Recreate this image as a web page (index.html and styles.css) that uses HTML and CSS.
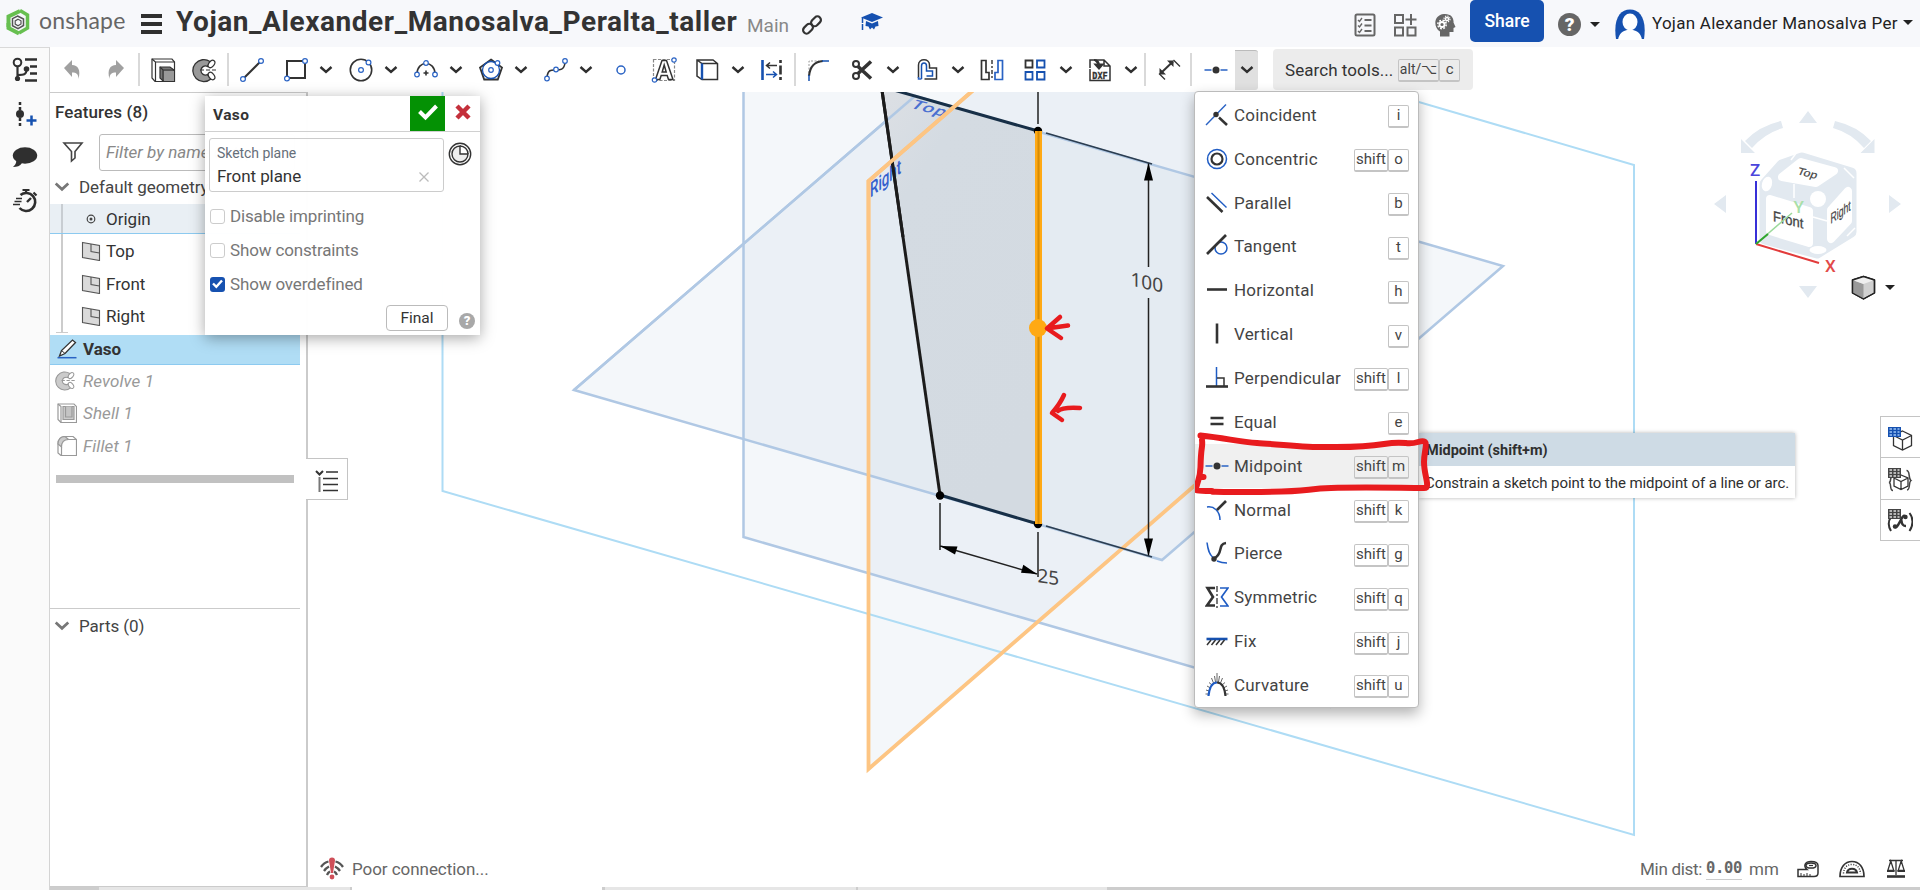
FILE: index.html
```html
<!DOCTYPE html>
<html lang="en">
<head>
<meta charset="utf-8">
<title>Yojan_Alexander_Manosalva_Peralta_taller</title>
<link rel="stylesheet" href="styles.css">
</head>
<body>
<svg class="defs" width="0" height="0">
  <symbol id="chev" viewBox="0 0 14 10"><path d="M1.500 2l5.500 5 5.500-5" fill="none" stroke="currentColor" stroke-width="2.400"/></symbol>
  <symbol id="plane" viewBox="0 0 20 20"><path d="M1.500 1.500l17 3v15l-17-3z" fill="#dadada" stroke="#555" stroke-width="1.100"/><path d="M10 3v7.500l8.500 1.500" fill="none" stroke="#555" stroke-width="1.100"/></symbol>
  <symbol id="revolve" viewBox="0 0 28 28"><path d="M18 5.500a11 11 0 1 0 1 17.500l-3.500-4.500a4.500 4.500 0 1 1 0-8z" fill="currentColor" stroke="#333" stroke-width="1.300"/><ellipse cx="19.500" cy="8" rx="4.200" ry="2.600" transform="rotate(-52 19.500 8)" fill="#fff" stroke="#333" stroke-width="1.200"/><ellipse cx="19.500" cy="20" rx="4.200" ry="2.600" transform="rotate(52 19.500 20)" fill="#fff" stroke="#333" stroke-width="1.200"/><path d="M8 14h18" stroke="#333" stroke-width="1.200" stroke-dasharray="4 2"/></symbol>
</svg>

<header class="topbar">
  <svg class="logo" width="26" height="28" viewBox="0 0 26 28"><path d="M15 3L3.500 8.500V19" fill="none" stroke="#67bf50" stroke-width="4"/><path d="M3.500 15v5L14 25.500" fill="none" stroke="#67bf50" stroke-width="4"/><path d="M15 2.500l7.500 4.500v13l-8.500 5" fill="none" stroke="#67bf50" stroke-width="3.500"/><path d="M12.500 8l6 3v6.500l-5.500 3.200-5.500-3v-7z" fill="#f7f8fb" stroke="#555" stroke-width="1.500"/><path d="M13 11.200l3 1.600v3.200l-3 1.800-2.800-1.700v-3.200z" fill="none" stroke="#555" stroke-width="1.200"/></svg>
  <span class="brand">onshape</span>
  <span class="burger"><i></i><i></i><i></i></span>
  <h1 class="doc-title">Yojan_Alexander_Manosalva_Peralta_taller</h1>
  <span class="branch">Main</span>
  <svg class="link" width="22" height="22" viewBox="0 0 22 22" fill="none" stroke="#333" stroke-width="2.200"><rect x="9.500" y="3.800" width="11" height="7" rx="3.500" transform="rotate(-45 15 7.300)"/><rect x="1.500" y="11.200" width="11" height="7" rx="3.500" transform="rotate(-45 7 14.700)"/></svg>
  <svg class="grad" width="22" height="20" viewBox="0 0 22 20" fill="#1651b0"><path d="M11 1l11 4.500L11 10 0 5.500z"/><path d="M5 9l6 2.500L17 9l.5 5-3 .5-1.500 3-2-2-2 2-1.500-3-3-.5z"/><path d="M1.500 6v12" stroke="#1651b0" stroke-width="1.500" stroke-dasharray="5 1 6"/></svg>
  <div class="account">
    <svg width="22" height="24" viewBox="0 0 22 24" fill="none" stroke="#666"><rect x="1.500" y="1.500" width="19" height="21" rx="1.500" stroke-width="2"/><path d="M4 7l1.500 1.500L8 5M4 12.500L5.500 14 8 10.500M4 18l1.500 1.500L8 16" stroke-width="1.400"/><path d="M10.500 7h7M10.500 12.500h7M10.500 18h7" stroke-width="2"/></svg>
    <svg width="24" height="24" viewBox="0 0 24 24" fill="none" stroke="#666" stroke-width="2"><path d="M2 2h8v8H2zM2 14.500h8v8H2zM14.500 14.500h8v8h-8zM18 1v11M12.500 6.500h11"/></svg>
    <svg width="22" height="24" viewBox="0 0 22 24"><path d="M6 23.500v-5C-1 14-.5 2 10 1c7-.5 10 4 9.500 8.500L21.500 14l-2 1v4h-4v4.500z" fill="#666"/><g fill="none" stroke="#fff"><circle cx="8" cy="11.500" r="2.500" stroke-width="1.800"/><circle cx="8" cy="11.500" r="4.200" stroke-width="1.500" stroke-dasharray="1.800 1.500"/><circle cx="13" cy="6" r="1.600" stroke-width="1.500"/><circle cx="13" cy="6" r="3" stroke-width="1.200" stroke-dasharray="1.200 1.160"/></g></svg>
    <button class="share">Share</button>
    <span class="help">?</span>
    <i class="tri"></i>
    <svg class="avatar" width="30" height="31" viewBox="0 0 30 31"><path d="M1 30C-2 10 5 .5 15 .5S32 10 29 30z" fill="#1651b0"/><ellipse cx="15" cy="13" rx="7.500" ry="8.500" fill="#fff"/><path d="M3 31c1-7 5-9 9-10h6c4 1 8 3 9 10z" fill="#fff"/></svg>
    <span class="user">Yojan Alexander Manosalva Per</span>
    <i class="tri tri-user"></i>
  </div>
</header>

<div class="shell">
  <nav class="rail">
    <svg width="26" height="26" viewBox="0 0 26 26" fill="none" stroke="#2f2f2f"><circle cx="5.500" cy="5.500" r="3.800" stroke-width="2"/><path d="M5.500 9v13M5.500 18c7 0 9-1 9-5" stroke-width="2.200"/><circle cx="5.500" cy="21.500" r="2.600" fill="#2f2f2f" stroke="none"/><circle cx="14.500" cy="12" r="2.800" fill="#2f2f2f" stroke="none"/><path d="M13 2.500h12M18 9.500h7M18 16.500h7M13 23.500h12" stroke-width="2.300"/></svg>
    <svg width="26" height="26" viewBox="0 0 26 26"><path d="M8 1v8M8 17v9" stroke="#2f2f2f" stroke-width="2.500" stroke-dasharray="3 2"/><circle cx="8" cy="13" r="4" fill="#2f2f2f"/><path d="M14.500 19.500h10M19.500 14.500v10" stroke="#1651b0" stroke-width="2.500"/></svg>
    <svg width="26" height="26" viewBox="0 0 26 26"><ellipse cx="13" cy="11.500" rx="12.200" ry="8.300" fill="#2f2f2f"/><path d="M4 15c1 4-1 6-3 8 4 0 7-1 9-4z" fill="#2f2f2f"/></svg>
    <svg width="26" height="26" viewBox="0 0 26 26" fill="none" stroke="#2f2f2f"><path d="M8.500 7a9 9 0 1 1-1 13" stroke-width="2.600"/><path d="M10.500 2h7M14 2v4M21.500 4.500l3 3" stroke-width="2.200"/><path d="M15 14l4-4" stroke-width="2.400"/><path d="M4 10.500h6M2.500 13.500h7M1 16.500h7" stroke-width="1.500"/></svg>
  </nav>

  <div class="work">
    <div class="toolbar">
      <span class="tool"><svg viewBox="0 0 28 28"><path d="M6 12l8-8v5c6 0 9 5 6.500 14 0-5-2-6.500-6.500-6.500V21z" fill="#a0a0a0"/></svg></span>
      <span class="tool"><svg viewBox="0 0 28 28"><path d="M23 12l-8-8v5c-6 0-9 5-6.500 14 0-5 2-6.500 6.500-6.500V21z" fill="#a0a0a0"/></svg></span>
      <i class="sep first"></i>
      <span class="tool"><svg viewBox="0 0 28 28" stroke="#333" stroke-width="1.200"><path d="M3 3h20l2.500 3v19.500H6L3 22z" fill="#fff"/><path d="M3 3l3.500 3v19M6.500 6h19" fill="none"/><path d="M11 11h10l4 3v11H14l-3-3z" fill="#777"/><path d="M11 11l3 3h11M14 14v11" fill="none"/><path d="M15 15h10v10H15z" fill="#999" stroke="none"/></svg></span>
      <span class="tool dark"><svg><use href="#revolve"/></svg></span>
      <i class="sep"></i>
      <span class="tool"><svg viewBox="0 0 28 28"><path d="M6 22L22 6" stroke="#333" stroke-width="2"/><g class="pt"><circle cx="5" cy="23" r="2.400"/><circle cx="23" cy="5" r="2.400"/></g></svg></span>
      <span class="tool"><svg viewBox="0 0 28 28"><path d="M5 5h18v17H5z" fill="none" stroke="#333" stroke-width="2"/><g class="pt"><circle cx="5" cy="22.500" r="2.400"/><circle cx="23" cy="5" r="2.400"/></g></svg></span>
      <svg class="chev"><use href="#chev"/></svg>
      <span class="tool"><svg viewBox="0 0 28 28"><circle cx="14" cy="14" r="10.700" fill="none" stroke="#333" stroke-width="1.600"/><g class="pt"><circle cx="14" cy="14" r="2.400"/><circle cx="21.500" cy="6.500" r="2.400"/></g></svg></span>
      <svg class="chev"><use href="#chev"/></svg>
      <span class="tool"><svg viewBox="0 0 28 28"><path d="M5 18c0-14 18-14 18 0M11.500 17h5M14 14.500v5" fill="none" stroke="#333" stroke-width="1.600"/><g class="pt"><circle cx="5" cy="18.500" r="2.300"/><circle cx="14" cy="7" r="2.300"/><circle cx="23" cy="18.500" r="2.300"/></g></svg></span>
      <svg class="chev"><use href="#chev"/></svg>
      <span class="tool"><svg viewBox="0 0 28 28"><path d="M14 3.500l11 8-4.200 12H7.200L3 11.500z" fill="none" stroke="#333" stroke-width="1.800"/><circle cx="14" cy="14" r="8.500" fill="none" stroke="#1651b0" stroke-width="1.300"/><g class="pt"><circle cx="14" cy="14" r="2.300"/><circle cx="20.500" cy="7" r="2.300"/></g></svg></span>
      <svg class="chev"><use href="#chev"/></svg>
      <span class="tool"><svg viewBox="0 0 28 28"><path d="M5 21c1-8 5-7 9-7s8 0 9-7" fill="none" stroke="#333" stroke-width="1.600"/><g class="pt"><circle cx="5" cy="22.500" r="2.300"/><circle cx="14" cy="13.500" r="2.300"/><circle cx="23" cy="5" r="2.300"/></g></svg></span>
      <svg class="chev"><use href="#chev"/></svg>
      <span class="tool"><svg viewBox="0 0 28 28"><circle cx="14" cy="14" r="4" fill="none" stroke="#2a63c4" stroke-width="1.500"/></svg></span>
      <span class="tool"><svg viewBox="0 0 28 28"><rect x="3.500" y="3.500" width="21" height="21" fill="none" stroke="#888" stroke-width="1.200" stroke-dasharray="3 1.500"/><path d="M12 4.500h4.500l6.500 19h-4.500l-1.300-4h-6L9.800 23.500H5.500zm2.200 4.500l-2 7h4z" fill="#fff" stroke="#333" stroke-width="1.500"/><g class="pt"><circle cx="24" cy="4" r="2.200"/><circle cx="4.500" cy="24" r="2.200"/></g></svg></span>
      <span class="tool"><svg viewBox="0 0 28 28" fill="none" stroke="#333" stroke-width="1.500"><path d="M4 4h16l4.500 3.500v16H9L4 20zM4 4l5 3.500h15.500"/><path d="M9 7.500v16" stroke="#1651b0" stroke-width="2.400"/></svg></span>
      <svg class="chev"><use href="#chev"/></svg>
      <span class="tool"><svg viewBox="0 0 28 28"><path d="M4.500 4v20" stroke="#1651b0" stroke-width="2.600"/><path d="M22.500 4v20" stroke="#333" stroke-width="2.600" stroke-dasharray="3 2.500 9 2.500"/><path d="M19 9.500H9M12 6.500l-3.500 3 3.500 3" fill="none" stroke="#333" stroke-width="1.500"/><path d="M8 18.500h10M15 15.500l3.500 3-3.500 3" fill="none" stroke="#1651b0" stroke-width="1.500"/></svg></span>
      <i class="sep"></i>
      <span class="tool"><svg viewBox="0 0 28 28" fill="none"><path d="M4 17V5h10" stroke="#999" stroke-dasharray="2 1.500"/><path d="M4 20C5 10 10 5.500 18 5" stroke="#333" stroke-width="2.200"/><path d="M4 19v6M17 5h7" stroke="#1651b0" stroke-width="1.500"/></svg></span>
      <span class="tool"><svg viewBox="0 0 28 28" fill="none" stroke="#333"><circle cx="8" cy="8" r="3" stroke-width="2"/><circle cx="8" cy="20" r="3" stroke-width="2"/><path d="M10 10.500L23 22.500M10 17.500L23 5.500" stroke-width="3.600"/></svg></span>
      <svg class="chev"><use href="#chev"/></svg>
      <span class="tool"><svg viewBox="0 0 28 28" fill="none"><path d="M5.500 22V9c0-7 11-7 11 0v3h7v11h-12" stroke="#333" stroke-width="1.500"/><path d="M8.500 23V10c0-4 5-4 5 0v5h6v5h-6" stroke="#1651b0" stroke-width="1.500"/><path d="M5.500 21v2h3" stroke="#2a63c4" stroke-width="1.500"/></svg></span>
      <svg class="chev"><use href="#chev"/></svg>
      <span class="tool"><svg viewBox="0 0 28 28" fill="none" stroke-width="1.700"><path d="M3.500 4.500H8v12h3v7H3.500z" stroke="#333"/><path d="M14 4v20" stroke="#333" stroke-width="1.400" stroke-dasharray="4 2 2 2"/><path d="M24.500 4.500H20v12h-3v7h7.500z" stroke="#2a63c4"/></svg></span>
      <span class="tool"><svg viewBox="0 0 28 28" fill="none" stroke="#1651b0" stroke-width="1.800"><path d="M4.500 4.500h7v7h-7z" stroke="#333"/><path d="M16 4.500h7.500v7H16zM4.500 16h7v7.500h-7zM16 16h7.500v7.500H16z"/></svg></span>
      <svg class="chev"><use href="#chev"/></svg>
      <span class="tool"><svg viewBox="0 0 28 28" fill="none" stroke="#333"><path d="M4 12V4h14l6 6v14.500H4V13M18 4v6h6" stroke-width="1.500"/><path d="M8 4c4 0 5 2 5 6M9.500 8.500l3.500 4 3.500-4z" stroke-width="2" fill="#333"/><text x="14" y="23" class="dxf">DXF</text></svg></span>
      <svg class="chev"><use href="#chev"/></svg>
      <i class="sep"></i>
      <span class="tool"><svg viewBox="0 0 28 28" fill="#333" stroke="#333"><path d="M6 17L18 5.500" stroke-width="2"/><path d="M4.500 18.500V12l6.500 6.500zM18.500 4.500H12l6.500 6.500z" stroke="none"/><path d="M4 17.500l6 6M18.500 4l6.500 6.500" stroke-width="1.300"/></svg></span>
      <i class="sep"></i>
      <span class="tool"><svg viewBox="0 0 28 28"><path d="M2.500 14h7M18.500 14h7" stroke="#2a63c4" stroke-width="1.700"/><circle cx="14" cy="14" r="3.500" fill="#333"/></svg></span>
      <span class="drop"><svg class="chev"><use href="#chev"/></svg></span>
      <div class="search">Search tools...<kbd class="wide">alt/⌥</kbd><kbd>c</kbd></div>
    </div>

    <div class="main">
      <aside class="panel">
        <h2 class="features">Features (8)</h2>
        <div class="filter"><svg width="22" height="22" viewBox="0 0 22 22"><path d="M2 2h18l-7 8.500V17l-3.500 3v-9.500z" fill="none" stroke="#444" stroke-width="1.600"/></svg><span class="filter-box">Filter by name or type</span></div>
        <div class="group default"><svg width="16" height="12"><use href="#chev"/></svg>Default geometry</div>
        <ul class="geometry">
          <li class="origin"><svg width="20" height="20" viewBox="0 0 20 20"><circle cx="10" cy="10" r="3.800" fill="none" stroke="#444" stroke-width="1.200"/><circle cx="10" cy="10" r="1.500" fill="#444"/></svg>Origin</li>
          <li><svg width="20" height="20"><use href="#plane"/></svg>Top</li>
          <li><svg width="20" height="20"><use href="#plane"/></svg>Front</li>
          <li><svg width="20" height="20"><use href="#plane"/></svg>Right</li>
        </ul>
        <ul class="features-list">
          <li class="active"><svg width="20" height="20" viewBox="0 0 20 20"><path d="M2.500 17l2-5.500L15.500 1l3 2.500L8 14.500z" fill="#fff" stroke="#333" stroke-width="1.300"/><path d="M4.500 11.500L8 14.500" stroke="#333"/><path d="M.5 18.700h19" stroke="#2a63c4" stroke-width="1.500"/></svg>Vaso</li>
          <li class="off"><svg width="23" height="23" class="faded"><use href="#revolve"/></svg>Revolve 1</li>
          <li class="off"><svg width="20" height="20" viewBox="0 0 20 20" fill="#fff" stroke="#999" stroke-width="1.200"><path d="M1 1h16l2.500 2.500v16H4L1 16.500z"/><path d="M1 1l3 2.500v16" fill="none"/><path d="M6 3.500h11v13H6z" fill="#ccc"/><path d="M8.500 3.500v10.500H15V3.500" fill="#c4c4c4"/></svg>Shell 1</li>
          <li class="off"><svg width="20" height="20" viewBox="0 0 20 20" fill="#fff" stroke="#999" stroke-width="1.200"><path d="M1 17V8c0-5 3-7.500 7-7.500h8l3.500 3v16H4z"/><path d="M1 8c0-5 3-7.500 7-7.500l3.500 3C7 3.500 4.500 6 4.500 11z" fill="#ccc"/><path d="M11 3.500h8.500M4.500 11v8.500" fill="none"/></svg>Fillet 1</li>
        </ul>
        <div class="rollback"></div>
        <div class="group parts"><svg width="16" height="12"><use href="#chev"/></svg>Parts (0)</div>
      </aside>

      <section class="view">
        <svg class="scene" width="1612" height="795" viewBox="308 92 1612 795">
          <defs><linearGradient id="face" x1="0" y1="0" x2=".6" y2="1"><stop offset="0" stop-color="#dfe1e5"/><stop offset=".3" stop-color="#d4dbe2"/><stop offset="1" stop-color="#d3dae1"/></linearGradient></defs>
          <g fill="#c8d7e6" fill-opacity=".2">
            <path d="M743.500 80V537L1331 707V80z"/><path d="M574 390L1162 560 1503 266 915 96z"/><path d="M868.500 181L1209-113V474L868.500 770z"/>
          </g>
          <path d="M442.500 80V491L1634 835V165L1330 76" fill="none" stroke="#aedcf5" stroke-width="2"/>
          <g fill="none" stroke="#b0c8e4" stroke-width="2.500"><path d="M743.500 80V537L1331 707"/><path d="M574 390L1162 560 1503 266 915 96z"/></g>
          <path d="M880.500 80L940 495 1038 524V131L862 80z" fill="url(#face)"/>
          <path d="M574 390L915 96" stroke="#b0c8e4" stroke-width="2.500"/>
          <path d="M880.500 80L940 495" stroke="#1b1b1b" stroke-width="3"/>
          <path d="M862 81L1038 131M940 495L1038 524" stroke="#172f47" stroke-width="3"/>
          <g class="plane-label"><text transform="matrix(1.120 .3 -.62 .66 909 107.500)">Top</text><text class="tall" transform="matrix(.74 -.6 0 1.150 870 198)">Right</text></g>
          <path d="M985 80L868.500 181V769L1209 473" fill="none" stroke="#fdc583" stroke-width="3.800"/>
          <path d="M880.500 80L903 237" stroke="#1b1b1b" stroke-width="3"/>
          <path d="M985 80L868.500 181V240" fill="none" stroke="#fdc583" stroke-width="3.800"/>
          <g stroke="#222" stroke-width="1.500" fill="none"><path d="M1038 92V124M1038 532V577M940 503V550M940.500 546L1037 574M1148.500 163V267M1148.500 298V556"/><path d="M1046 133L1152 164M1046 526L1152 557" stroke="#2b3d50" stroke-width="1.800"/></g>
          <path d="M1148.500 163l4.500 17.500h-9zM1148.500 556l4.500-17.500h-9zM940 546l17.500 .500-2.500 8zM1037 574l-16-1.200 2.300-8z" fill="#000"/>
          <circle cx="940" cy="495.500" r="4.200"/><circle cx="1038" cy="131" r="4.200"/><circle cx="1038" cy="524" r="4.200"/>
          <path d="M1038.500 131V524" stroke="#ffa914" stroke-width="7"/><path d="M1038.500 131V524" stroke="#d68c05" stroke-width="2"/>
          <circle cx="1038" cy="328" r="9" fill="#ffa914"/>
          <g class="dim"><text transform="matrix(1 .22 0 1 1130.500 285.500)">100</text><text transform="matrix(1 .15 0 1 1037.500 582)">25</text></g>
          <path d="M1060 317L1047 328.500 1061 338M1068 325.500L1050 328M1064 395Q1060 404 1052 413L1062 420M1058 411Q1062 407 1080 408" class="ink thin"/>

          <g fill="#e2e9f0"><path d="M1799 123h18l-9-12zM1799 286h18l-9 12zM1726 195v18l-12-9zM1889 195v18l12-9zM1741 139l14 14h-14zM1874.500 139v14h-14z"/><path d="M1781 121l2 7q-18 5-31 20l-7-7q14-15 36-20zM1835 121l-2 7q18 5 31 20l7-7q-14-15-36-20z"/></g>
          <path d="M1802 158L1851 173V232L1817 253 1765 239V184L1782 165z" fill="#e2e9f0" stroke="#e2e9f0" stroke-width="11" stroke-linejoin="round"/>
          <g fill="#fff" stroke="#fff" stroke-width="8" stroke-linejoin="round"><path d="M1770 199L1809 211V243L1770 231z"/><path d="M1782 177L1801 162 1834 171 1816 183z"/><path d="M1831 210L1848 191V221L1831 239z"/></g>
          <g fill="#fff"><circle cx="1818" cy="199" r="8"/><ellipse cx="1767" cy="184" rx="5" ry="7.500" transform="rotate(15 1767 184)"/><ellipse cx="1818" cy="250" rx="8.500" ry="4"/></g>
          <path d="M1794 184V198M1813 217L1827 221M1791 160l6-8M1844 168l10 10M1847 236l8-8" stroke="#fff" stroke-width="1.500"/>
          <g class="cube"><text transform="matrix(1 .25 -.35 .8 1796.500 174)">Top</text><text class="big" transform="matrix(1 .25 0 1.120 1773 221)">Front</text><text transform="matrix(.72 -.5 0 1.200 1830.500 224)">Right</text></g>
          <path d="M1756 244V181" stroke="#3730d8" stroke-width="2"/><path d="M1756 244L1819 263" stroke="#e23b3b" stroke-width="2"/><path d="M1756 244L1792 213" stroke="#9bd99b" stroke-width="1.500"/><path d="M1756 244L1768 234" stroke="#2fa52f" stroke-width="2"/>
          <g class="axis"><text x="1750" y="176" fill="#4b45dc">Z</text><text x="1825" y="272" fill="#e24a4a">X</text><text x="1793.500" y="213" fill="#a8e0a8">Y</text></g>
          <g stroke="#222" stroke-width="1.400" stroke-linejoin="round"><path d="M1852.500 280L1863.500 276.500 1874.500 280V293L1863.500 299 1852.500 293z" fill="#d0d0d0"/><path d="M1852.500 280L1863.500 284V299L1852.500 293z" fill="#999" stroke="none"/><path d="M1852.500 280L1863.500 276.500 1874.500 280 1863.500 284z" fill="#efefef" stroke="none"/><path d="M1852.500 280L1863.500 276.500 1874.500 280V293L1863.500 299 1852.500 293z" fill="none"/></g>
          <path d="M1885 285h10l-5 5z" fill="#222"/>
        </svg>

        <div class="list-toggle"><svg width="26" height="24" viewBox="0 0 26 24" fill="none" stroke="#333" stroke-width="1.600"><path d="M2 2l3.500 3.500L9 2" stroke-width="2"/><path d="M5.500 8v15" stroke="#777" stroke-width="2"/><path d="M12 3h12M9 9.500h15M9 15.500h15M9 21.500h15"/></svg></div>

        <div class="side-tabs">
          <span><svg viewBox="0 0 28 28"><path d="M17.500 6l9 4.500v10L17.500 25 8.500 20.500V10.500zM8.500 10.500l9 4.500 9-4.500M17.500 15v10" fill="#fff" stroke="#333" stroke-width="1.300"/><path d="M3 2h13v10H3z" fill="#1651b0"/><path d="M4.500 4h2.500m1.500 0h2.500m1.500 0h2M4.500 7h2.500m1.500 0h2.500m1.500 0h2M4.500 10h2.500m1.500 0h2.500m1.500 0h2" stroke="#9cc4f5" stroke-width="1.700"/></svg></span>
          <span><svg viewBox="0 0 28 28"><path d="M16 9l7 3v8l-7 3.500L9 20v-8zM9 12l7 3.500 7-3.500M16 15.500v8" fill="none" stroke="#333" stroke-width="1.300"/><path d="M8 10c-4 0-1 6-4 6.500 3 .5 0 8 4 8M21.500 4.500c4 0 1.500 8 4.500 10-3 2 0 9-4 9.500" fill="none" stroke="#444" stroke-width="1.500"/><path d="M3 2h13v10H3z" fill="#444"/><path d="M4.500 4h2.500m1.500 0h2.500m1.500 0h2M4.500 7h2.500m1.500 0h2.500m1.500 0h2M4.500 10h2.500m1.500 0h2.500m1.500 0h2" stroke="#ddd" stroke-width="1.500"/></svg></span>
          <span><svg viewBox="0 0 28 28"><path d="M6 10c-3.500 5-3 9 0 14M24.500 6c4 5 4 12 0 18" fill="none" stroke="#333" stroke-width="2"/><path d="M9 19q1.500 3 4-1l4-7q2-4 4-1M13 10q3-1 3.500 4T21 19" fill="none" stroke="#333" stroke-width="2.500"/><circle cx="10" cy="19.500" r="2.200" fill="#333"/><circle cx="20.500" cy="10" r="2.200" fill="#333"/><path d="M3 2h13v10H3z" fill="#444"/><path d="M4.500 4h2.500m1.500 0h2.500m1.500 0h2M4.500 7h2.500m1.500 0h2.500m1.500 0h2M4.500 10h2.500m1.500 0h2.500m1.500 0h2" stroke="#ddd" stroke-width="1.500"/></svg></span>
        </div>

        <div class="status">
          <svg width="24" height="24" viewBox="0 0 24 24" fill="none" stroke="#555" stroke-width="2.300"><path d="M1 10Q4 5.500 8.500 4.500M4 14Q6 11 9 9.500M7 18Q8 15.500 10 14.500M23 10Q20 5.500 15.500 4.500M20 14Q18 11 15 9.500M17 18Q16 15.500 14 14.500"/><path d="M9 3.500a3 3 0 0 1 6 0L13 16h-2z" fill="#cf4f59" stroke="none"/><circle cx="12" cy="20" r="2.400" fill="#cf4f59" stroke="none"/></svg>
          <span class="poor">Poor connection...</span>
          <span class="min">Min dist:</span><b class="value">0.00</b><span class="unit">mm</span>
          <svg class="m1" width="22" height="18" viewBox="0 0 22 18" fill="#fff" stroke="#333" stroke-width="1.500"><path d="M1 9.500h9C6 6 8 1.500 14 1.500c5 0 7 1.500 7 4V13c0 3-1.500 3.500-4 3.500H1z"/><ellipse cx="14" cy="5.500" rx="5" ry="2.600"/><path d="M12 5.500h4" stroke-width="1.200"/><path d="M4 16v-3M7 16v-2M10 16v-3M13 16v-2" stroke-width="1"/></svg>
          <svg class="m2" width="26" height="18" viewBox="0 0 26 18" fill="none" stroke="#333" stroke-width="1.700"><path d="M1 16.500C1 7 6 1.500 13 1.500S25 7 25 16.500z"/><path d="M8 12.500c1-5 9-5 10 0z" stroke-width="2"/><path d="M4.500 13.500C5 7.500 8 4.500 13 4.500s8 3 8.500 9" stroke-dasharray="1 1.500" stroke-width="1.500"/></svg>
          <svg class="m3" width="20" height="19" viewBox="0 0 20 19" fill="none" stroke="#333" stroke-width="1.300"><path d="M1 17.500h18" stroke-width="2.600"/><path d="M3 1.500h14M10 1v15M4.800 2L1.800 11.500h6zM15.200 2l-3 9.500h6z"/><path d="M1 12h7.500M11.500 12H19" stroke-width="2"/></svg>
        </div>
      </section>
    </div>
    <div class="tabs"><i class="t1"></i><i class="t2"></i><i class="t3"></i><i class="t4"></i><i class="t5"></i></div>
  </div>
</div>

<div class="dialog">
  <div class="dialog-head"><span>Vaso</span><b class="ok"><svg width="22" height="18" viewBox="0 0 22 18"><path d="M2.500 8.500l6 6L19.500 3" fill="none" stroke="#fff" stroke-width="4"/></svg></b><b class="cancel"><svg width="16" height="16" viewBox="0 0 16 16"><path d="M2 2l12 12M14 2L2 14" stroke="#c4303b" stroke-width="4.500"/></svg></b></div>
  <div class="dialog-row">
    <div class="field"><small>Sketch plane</small><span>Front plane</span><svg width="10" height="10" viewBox="0 0 10 10"><path d="M.5.5l9 9M9.500.5l-9 9" stroke="#bbb" stroke-width="1.300"/></svg></div>
    <svg class="clock" width="24" height="24" viewBox="0 0 24 24" fill="none" stroke="#333"><circle cx="12" cy="12" r="10.700" stroke-width="1.400"/><path d="M12 4a8 8 0 1 0 8 8h-8z" stroke-width="1.400" fill="#eee"/><path d="M12 4a8 8 0 0 1 8 8" stroke-width="1.400"/></svg>
  </div>
  <label class="check"><i></i>Disable imprinting</label>
  <label class="check"><i></i>Show constraints</label>
  <label class="check"><i class="on"><svg width="11" height="10" viewBox="0 0 11 10"><path d="M1 4.500l3.300 3.300L10 1.500" fill="none" stroke="#fff" stroke-width="2.400"/></svg></i>Show overdefined</label>
  <div class="dialog-foot"><button>Final</button><span class="help small">?</span></div>
</div>

<div class="tooltip"><b>Midpoint (shift+m)</b><p>Constrain a sketch point to the midpoint of a line or arc.</p></div>

<ul class="menu">
  <li><svg viewBox="0 0 24 24"><path d="M1 22L21 1.500" stroke="#2a63c4" stroke-width="1.400"/><circle cx="11" cy="11.500" r="2.700" fill="#333"/><path d="M14 14.500l8 7.500" stroke="#333" stroke-width="2.500"/></svg><span>Coincident</span><kbd>i</kbd></li>
  <li><svg viewBox="0 0 24 24" fill="none"><circle cx="12" cy="12" r="9.500" stroke="#1f5cc4" stroke-width="1.500"/><circle cx="12" cy="12" r="5.500" stroke="#333" stroke-width="2.200"/></svg><span>Concentric</span><kbd class="shift">shift</kbd><kbd>o</kbd></li>
  <li><svg viewBox="0 0 24 24"><path d="M2 6l15.500 15" stroke="#333" stroke-width="2.600"/><path d="M6.500 2l15 14.500" stroke="#1f5cc4" stroke-width="1.400"/></svg><span>Parallel</span><kbd>b</kbd></li>
  <li><svg viewBox="0 0 24 24"><circle cx="16" cy="14" r="6" fill="none" stroke="#1f5cc4" stroke-width="1.500"/><path d="M2 20L21 1" stroke="#333" stroke-width="2.600"/></svg><span>Tangent</span><kbd>t</kbd></li>
  <li><svg viewBox="0 0 24 24"><path d="M2 11.500h20" stroke="#333" stroke-width="2.600"/></svg><span>Horizontal</span><kbd>h</kbd></li>
  <li><svg viewBox="0 0 24 24"><path d="M12 1.500v20" stroke="#333" stroke-width="2.600"/></svg><span>Vertical</span><kbd>v</kbd></li>
  <li><svg viewBox="0 0 24 24" fill="none"><path d="M11.500 1v19" stroke="#1f5cc4" stroke-width="1.500"/><path d="M12 12h7v8" stroke="#333" stroke-width="1.500"/><path d="M1 20.500h22" stroke="#333" stroke-width="2.600"/></svg><span>Perpendicular</span><kbd class="shift">shift</kbd><kbd>l</kbd></li>
  <li><svg viewBox="0 0 24 24"><path d="M5.500 8h13M5.500 14h13" stroke="#333" stroke-width="2.600"/></svg><span>Equal</span><kbd>e</kbd></li>
  <li class="hover"><svg viewBox="0 0 24 24"><path d="M.5 12h7M16.500 12h7" stroke="#2a63c4" stroke-width="1.600"/><circle cx="12" cy="12" r="3.500" fill="#333"/></svg><span>Midpoint</span><kbd class="shift">shift</kbd><kbd>m</kbd></li>
  <li><svg viewBox="0 0 24 24" fill="none"><path d="M2 9c7-1 13 4 13 13" stroke="#1f5cc4" stroke-width="1.500"/><path d="M12 12l9-9" stroke="#333" stroke-width="2.600"/></svg><span>Normal</span><kbd class="shift">shift</kbd><kbd>k</kbd></li>
  <li><svg viewBox="0 0 24 24" fill="none"><path d="M2 1.500C3 9 4 13 8 16.500M12 20q5 2 10 2" stroke="#1f5cc4" stroke-width="1.500"/><path d="M9 17.500C19 13 12 3 21 2" stroke="#333" stroke-width="2.500"/><circle cx="9" cy="18" r="2.700" fill="#333"/></svg><span>Pierce</span><kbd class="shift">shift</kbd><kbd>g</kbd></li>
  <li><svg viewBox="0 0 24 24" fill="none"><path d="M10 3H2.500l5.500 9-6 8.500h8" stroke="#333" stroke-width="2.600"/><path d="M12 1v22" stroke="#333" stroke-width="1.300" stroke-dasharray="6 2 2 2"/><path d="M15 3h8l-6.500 9 6.500 9h-8" stroke="#1f5cc4" stroke-width="1.700"/></svg><span>Symmetric</span><kbd class="shift">shift</kbd><kbd>q</kbd></li>
  <li><svg viewBox="0 0 24 24"><path d="M1.500 10h21" stroke="#1651b0" stroke-width="2.600"/><path d="M2 16l4-5M6.500 16l4-5M11 16l4-5M15.500 16l4-5" stroke="#333" stroke-width="1.500"/></svg><span>Fix</span><kbd class="shift">shift</kbd><kbd>j</kbd></li>
  <li><svg viewBox="0 0 24 24" fill="none"><path d="M.5 21h3M1 17l3 1M2 13l3.500 2M4 9.500l3 2.500M6.500 5l2 5M9.500 3l1 6M12 0v9M14.500 3l-1 6M17.500 5l-2 5M20 9.500L17 12M22 13l-3.500 2M23 17l-3 1M23.500 21h-3" stroke="#666" stroke-width="1"/><path d="M3.500 23C4.500 14 7 9.500 12 9.500" stroke="#1f5cc4" stroke-width="2.200"/><path d="M12 9.500c5 0 7.500 4.500 8.500 13.500" stroke="#333" stroke-width="2.200"/></svg><span>Curvature</span><kbd class="shift">shift</kbd><kbd>u</kbd></li>
</ul>

<svg class="markup" width="240" height="70" viewBox="1195 430 240 70"><path class="ink" d="M1200.500 435.500C1225 438 1240 442 1257 443S1300 447 1321 447 1360 448 1384 444 1405 446 1418 442 1424 448 1424 462 1431 488 1424 488 1360 487 1331 488 1310 492 1249 492 1225 491 1206 491 1200 490 1200.500 467 1203 448 1202 440M1200.500 477h3"/></svg>
</body>
</html>
```
FILE: styles.css
```css
* { box-sizing: border-box; }
body { margin: 0; width: 1920px; height: 890px; overflow: hidden; display: flex; flex-direction: column; position: relative; background: #fff; color: #333; font: 17px Roboto, "Liberation Sans", sans-serif; }
ul { list-style: none; margin: 0; padding: 0; }
svg { display: block; flex: none; }
.defs { position: absolute; }

.topbar { height: 47px; flex: none; background: #f7f8fb; display: flex; align-items: center; padding-left: 5px; white-space: nowrap; }
.logo { margin: -3px 8px 0 0; }
.brand { width: 102px; font: 23px Lato, sans-serif; color: #666; margin-top: -7px; letter-spacing: .2px; }
.burger { width: 21px; display: flex; flex-direction: column; gap: 4px; }
.burger i { height: 4px; background: #2f2f2f; }
.doc-title { margin: -4px 0 0 14px; width: 571px; font-size: 28px; font-weight: 700; letter-spacing: .57px; }
.branch { width: 54px; font-size: 19px; color: #888; margin-top: 3px; }
.link { margin: 3px 38px 0 0; }
.grad { margin-top: -4px; }
.account { margin-left: auto; display: flex; align-items: center; height: 47px; padding-right: 7px; }
.account > svg { margin: 2px 17px 0 0; }
.account > svg:nth-of-type(3) { margin-right: 14px; }
.share { width: 74px; height: 42px; align-self: flex-start; border: 0; border-radius: 5px; background: #1651b0; color: #fff; font: 500 17.500px Roboto, sans-serif; padding: 0 0 0; }
.help { width: 23px; height: 23px; margin: 2px 9px 0 14px; border-radius: 50%; background: #666; color: #fff; font-weight: 900; font-size: 19px; line-height: 23px; text-align: center; }
.tri { border: 5px solid transparent; border-top-color: #222; border-bottom: 0; margin-top: 1px; }
.account > .avatar { margin: 2px 7px 0 15px; }
.user { width: 242px; font-size: 17px; color: #222; margin-top: -1px; letter-spacing: .25px; }
.tri-user { margin: -3px 0 0 9px; }

.shell { flex: 1; display: flex; min-height: 0; }
.rail { width: 50px; background: #fafafa; border-right: 1px solid #d4d4d4; border-top: 1px solid #d9d9d9; display: flex; flex-direction: column; align-items: center; gap: 17.500px; padding-top: 9px; }
.work { flex: 1; display: flex; flex-direction: column; min-width: 0; }
.toolbar { height: 45px; flex: none; display: flex; align-items: center; }
.tool { width: 43.100px; flex: none; display: flex; justify-content: center; }
.tool svg { width: 28px; height: 28px; }
.dark { color: #999; }
.pt { fill: #fff; stroke: #2a63c4; stroke-width: 1.200px; }
.dxf { font: 700 8.500px "DejaVu Sans Mono", monospace; text-anchor: middle; fill: #333; stroke-width: .3px; }
.chev { width: 14px; height: 10px; margin: 0 6px 0 2px; color: #2f2f2f; }
.sep { width: 2px; height: 33px; margin-right: 1.500px; background: #d9d9d9; flex: none; }
.first { margin-left: 1.500px; }
.drop { width: 23px; height: 40px; background: #e0e0e0; border-top: 1px solid #bbb; border-radius: 0 3px 3px 0; display: flex; align-items: center; margin-left: -2px; }
.drop .chev { margin: 0 auto; }
.search { width: 200px; height: 41px; margin-left: 15px; padding-left: 12px; background: #ececec; border-radius: 4px; display: flex; align-items: center; white-space: nowrap; letter-spacing: .05px; }
kbd { width: 21px; height: 23px; flex: none; border: 1px solid #c4c4c4; border-bottom-width: 2px; border-radius: 2px; font: 15px/19px Roboto, sans-serif; text-align: center; letter-spacing: 0; color: #444; }
kbd.wide { width: 41px; margin-left: auto; font-size: 14px; }
.search kbd { margin-top: 2px; }
.search kbd:last-child { margin-right: 13px; }

.main { flex: 1; display: flex; min-height: 0; }
.panel { width: 258px; border: solid #cbcbcb; border-width: 1px 2px 1px 0; padding-right: 6px; flex: none; }
.features { margin: 0; padding: 9px 0 0 5px; height: 40px; font-size: 17px; font-weight: 500; letter-spacing: .1px; }
.filter { height: 38px; display: flex; align-items: center; padding-left: 12px; }
.filter-box { margin-left: 15px; width: 196px; height: 37px; border: 1px solid #bbb; border-radius: 3px; padding-left: 6px; line-height: 35px; font-style: italic; color: #888; white-space: nowrap; overflow: hidden; }
.group { height: 32px; display: flex; align-items: center; gap: 9px; padding-left: 4px; color: #444; letter-spacing: -.05px; }
.default { height: 33px; padding-bottom: 2px; }
.group svg { color: #777; }
.geometry { margin-bottom: 2px; background: linear-gradient(#ccc, #ccc) 11px 0 / 2px 100% no-repeat, linear-gradient(#ccc, #ccc) 6px 100% / 12px 1px no-repeat; }
.geometry li { height: 32.500px; display: flex; align-items: center; gap: 5px; padding-left: 31px; }
.geometry .origin { height: 30px; margin-bottom: 1px; background: linear-gradient(#c8cdd2, #c8cdd2) 11px 0 / 2px 100% no-repeat #e9eff4; border-bottom: 1px solid #8ccaf0; }
.features-list li { height: 32.500px; display: flex; align-items: center; gap: 6px; padding-left: 7px; }
.features-list .active { height: 30px; background: #b0ddf5; border-bottom: 1px solid #8ccaf0; font-weight: 700; }
.features-list .off { font-style: italic; color: #999; letter-spacing: .1px; }
.off .faded { margin: 0 -1px 0 -2px; opacity: .5; color: #999; }
.rollback { margin: 13px 0 0 6px; width: 238px; height: 8px; background: #c1c1c1; }
.parts { margin-top: 125px; border-top: 1px solid #cbcbcb; height: 35px; }

.view { flex: 1; position: relative; display: flex; flex-direction: column; justify-content: flex-end; }
.scene { position: absolute; left: 0; top: 0; }
.plane-label text { font: 500 17px Roboto, sans-serif; fill: #4a6fd0; letter-spacing: .8px; }
.plane-label .tall { letter-spacing: 0; font-size: 18px; fill: #3560cc; }
.dim text { font: 19px "Noto Sans", sans-serif; fill: #444; }
.cube text { font: 500 12px "Liberation Sans", sans-serif; fill: #444; stroke: #444; stroke-width: .2px; }
.cube .big { font-size: 13px; stroke-width: .3px; }
.axis text { font: 500 17px Roboto, sans-serif; }
.ink { fill: none; stroke: #e81b1e; stroke-width: 6px; stroke-linecap: round; stroke-linejoin: round; }
.ink.thin { stroke-width: 4.500px; }
.list-toggle { position: absolute; left: -2px; top: 366px; width: 42px; height: 42px; background: #fff; border: 1px solid #c4c4c4; border-left: 0; display: flex; align-items: center; padding: 3px 0 0 8px; }
.side-tabs { position: absolute; right: 0; top: 324px; width: 40px; height: 125px; background: #fff; border: 1px solid #c4c4c4; border-right: 0; display: flex; flex-direction: column; }
.side-tabs span { flex: 1; display: flex; align-items: center; padding: 3px 0 0 4px; }
.side-tabs span + span { border-top: 1px solid #c4c4c4; }
.side-tabs svg { width: 28px; height: 28px; }
.status { position: relative; height: 36px; display: flex; align-items: center; padding: 0 0 0 12px; color: #666; white-space: nowrap; border-bottom: 1px solid transparent; }
.poor { margin-left: 8px; font-size: 17px; color: #666; letter-spacing: -.05px; }
.min { margin-left: auto; width: 66px; font-size: 17px; letter-spacing: -.3px; }
.value { width: 36px; font: 700 15.500px/21px "DejaVu Sans Mono", monospace; letter-spacing: -.3px; border-bottom: 1px solid #ccc; }
.unit { margin-left: 7px; width: 28px; font-size: 17px; }
.m1 { margin-left: 20px; } .m2 { margin-left: 20px; } .m3 { margin: 0 14px 0 21px; }
.tabs { height: 3px; flex: none; display: flex; background: #cdcdcd; }
.t1 { width: 49px; } .t2 { width: 251px; background: #e6e6e6; } .t3 { width: 250px; margin-left: 2px; background: #fff; } .t4 { width: 251px; margin-left: 3px; background: #e6e6e6; } .t5 { width: 249px; margin-left: 2px; background: #e6e6e6; }

.dialog { position: absolute; left: 205px; top: 96px; width: 275px; height: 239px; background: rgba(255,255,255,.98); box-shadow: 0 3px 14px rgba(0,0,0,.35); }
.dialog-head { height: 36px; display: flex; align-items: center; padding-left: 8px; border-bottom: 1px solid #d0d0d0; font-size: 15.500px; font-weight: 700; letter-spacing: .4px; }
.dialog-head span { padding-top: 2px; }
.ok, .cancel { width: 35px; height: 35px; display: flex; align-items: center; justify-content: center; padding-bottom: 3px; }
.ok { margin-left: auto; background: #049104; }
.dialog-row { display: flex; padding: 6px 0 0 4px; }
.field { position: relative; width: 235px; height: 54px; border: 1px solid #ccc; border-radius: 3px; padding: 5px 0 0 7px; display: flex; flex-direction: column; }
.field small { font-size: 14px; line-height: 18px; color: #666f7a; letter-spacing: -.05px; }
.field span { line-height: 28px; letter-spacing: -.08px; }
.field svg { position: absolute; right: 14px; top: 33px; }
.clock { margin: 4px 0 0 4px; }
.check { height: 34px; display: flex; align-items: center; padding-left: 5px; gap: 5px; color: #777; letter-spacing: -.15px; }
.check:nth-of-type(1) { margin-top: 7px; }
.check i { width: 15px; height: 15px; border: 1px solid #ccc; border-radius: 3px; }
.check .on { border: 0; background: #1651b0; display: flex; align-items: center; justify-content: center; }
.dialog-foot { display: flex; padding: 4px 0 0 181px; }
.dialog-foot button { width: 62px; height: 26px; background: #fff; border: 1px solid #bbb; border-radius: 4px; font: 15.500px Roboto, sans-serif; color: #333; padding: 0; }
.help.small { width: 16px; height: 16px; margin: 8px 0 0 11px; font-size: 13px; line-height: 16px; background: #a8a8a8; }

.menu { position: absolute; left: 1194px; top: 91px; width: 225px; height: 617px; background: #fff; border: 1px solid #bbb; border-radius: 4px; box-shadow: 0 6px 14px rgba(0,0,0,.3); padding-top: 1px; }
.menu li { height: 43.850px; display: flex; align-items: center; padding: 0 9px 0 10px; }
.menu svg { width: 24px; height: 24px; margin-right: 5px; }
.menu li span { margin-right: auto; letter-spacing: .2px; color: #444; }
.menu kbd { margin-top: 4px; }
.menu kbd.shift { width: 34px; }
.hover { background: #f0f0f0; }
.tooltip { position: absolute; left: 1419px; top: 433px; width: 376px; height: 65px; background: #fff; box-shadow: 0 0 4px rgba(0,0,0,.3); font-size: 15px; color: #2f2f2f; white-space: nowrap; }
.tooltip b { display: block; height: 33px; padding-left: 7px; background: #cedbe5; line-height: 35px; font-size: 14.500px; }
.tooltip p { margin: 0; padding-left: 6px; line-height: 35px; letter-spacing: -.08px; }
.markup { position: absolute; left: 1195px; top: 430px; }
```
